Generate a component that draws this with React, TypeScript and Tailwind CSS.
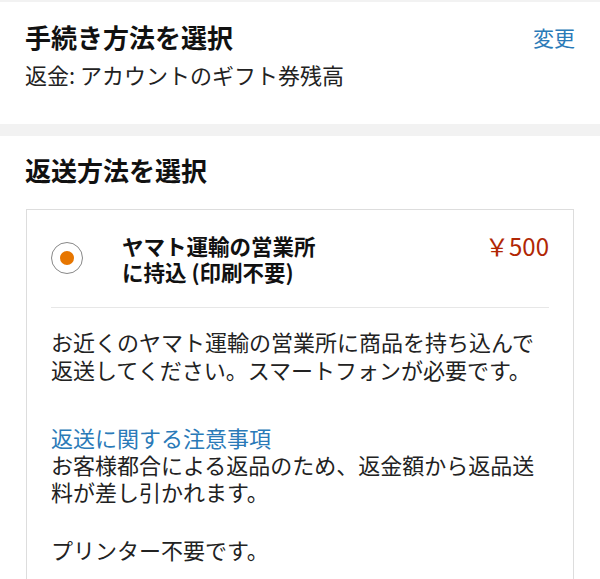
export default function App() {
  return (
    <div
      className="w-[600px] h-[579px] overflow-hidden bg-white text-[#111]"
      style={{ fontFamily: '"Noto Sans CJK JP", "Noto Sans", sans-serif' }}
    >
      <div className="h-[2px] bg-[#f2f2f2]" />
      <section className="px-[25px] pt-[18px] pb-[35px]">
        <div className="flex items-center justify-between">
          <h1 className="text-[26px] leading-[34px] font-bold">手続き方法を選択</h1>
          <span className="text-[21px] leading-[34px] text-[#2a7ab8]">変更</span>
        </div>
        <p className="mt-[5px] text-[22px] leading-[30px] text-[#222]">返金: アカウントのギフト券残高</p>
      </section>
      <div className="h-[12px] bg-[#f2f2f2]" />
      <section className="pt-[17px]">
        <h2 className="px-[25px] text-[26px] leading-[34px] font-bold">返送方法を選択</h2>
        <div className="mx-[26px] mt-[22px] border border-[#dddddd] px-[24px] pb-[40px]">
          <div className="flex pt-[23px] pb-[22px] border-b border-[#e7e7e7]">
            <div className="mt-[9px] w-[32px] h-[32px] rounded-full border-[1.5px] border-[#888] flex items-center justify-center shrink-0">
              <div className="w-[14px] h-[14px] rounded-full bg-[#e77600]" />
            </div>
            <div className="ml-[39px] flex-1 text-[21.5px] leading-[26px] font-semibold">
              <div>ヤマト運輸の営業所</div>
              <div>に持込 (印刷不要)</div>
            </div>
            <div className="text-[24px] leading-[26px] text-[#b12704]">￥500</div>
          </div>
          <div className="text-[22px] text-[#222]">
            <p className="mt-[19px] leading-[28px]">
              お近くのヤマト運輸の営業所に商品を持ち込んで
              <br />
              返送してください。スマートフォンが必要です。
            </p>
            <p className="mt-[40px] leading-[28px] text-[#2a7ab8]">返送に関する注意事項</p>
            <p className="leading-[27px]">
              お客様都合による返品のため、返金額から返品送
              <br />
              料が差し引かれます。
            </p>
            <p className="mt-[30px] leading-[28px]">プリンター不要です。</p>
          </div>
        </div>
      </section>
    </div>
  );
}
